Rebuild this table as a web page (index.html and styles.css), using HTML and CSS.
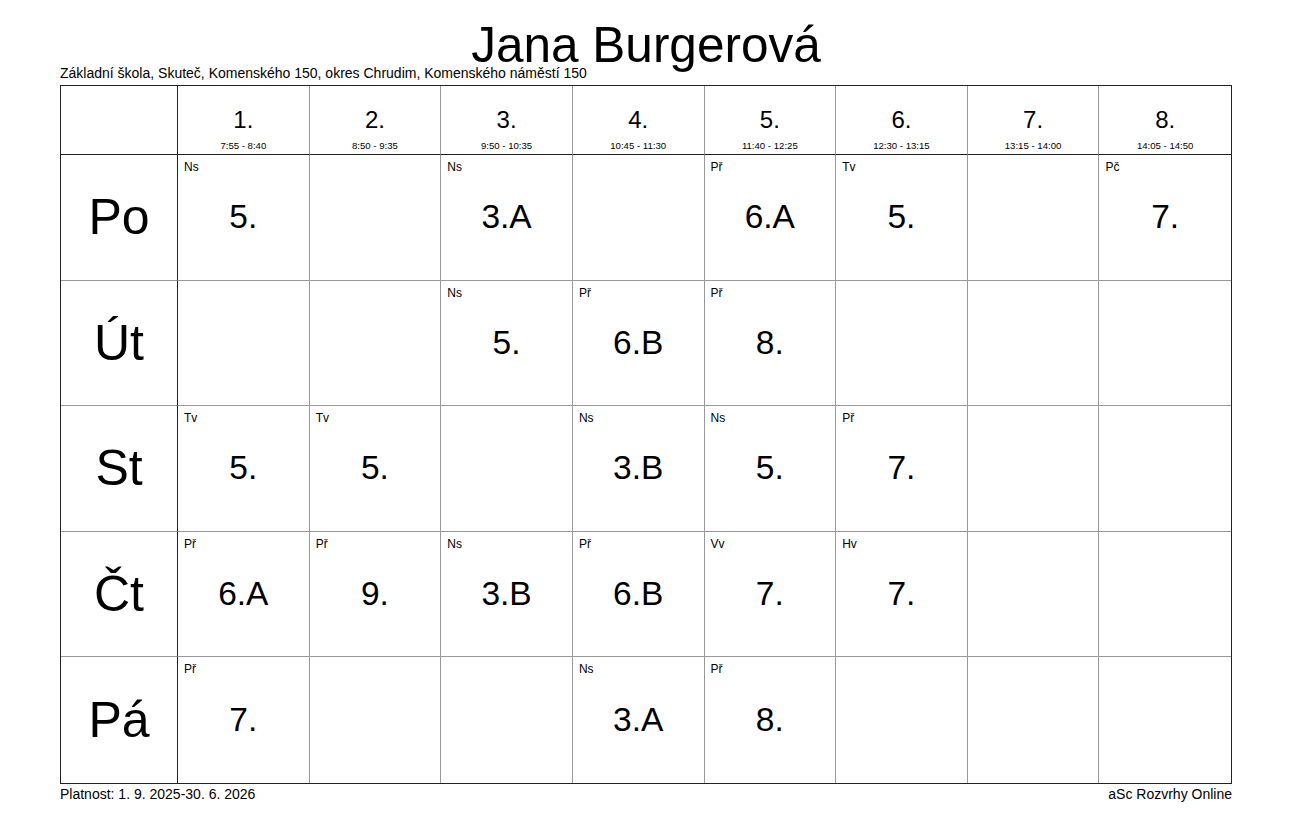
FILE: index.html
```html
<!DOCTYPE html>
<html lang="cs">
<head>
<meta charset="utf-8">
<title>Jana Burgerová</title>
<link rel="stylesheet" href="styles.css">
</head>
<body>
<div class="page">
  <h1 class="title">Jana Burgerová</h1>
  <div class="subtitle">Základní škola, Skuteč, Komenského 150, okres Chrudim, Komenského náměstí 150</div>
  <div class="timetable">
    <div class="corner"></div>
    <div class="period"><span class="num">1.</span><span class="time">7:55 - 8:40</span></div>
    <div class="period"><span class="num">2.</span><span class="time">8:50 - 9:35</span></div>
    <div class="period"><span class="num">3.</span><span class="time">9:50 - 10:35</span></div>
    <div class="period"><span class="num">4.</span><span class="time">10:45 - 11:30</span></div>
    <div class="period"><span class="num">5.</span><span class="time">11:40 - 12:25</span></div>
    <div class="period"><span class="num">6.</span><span class="time">12:30 - 13:15</span></div>
    <div class="period"><span class="num">7.</span><span class="time">13:15 - 14:00</span></div>
    <div class="period last"><span class="num">8.</span><span class="time">14:05 - 14:50</span></div>

    <div class="day">Po</div>
    <div class="cell"><span class="subj">Ns</span><span class="cls">5.</span></div>
    <div class="cell"></div>
    <div class="cell"><span class="subj">Ns</span><span class="cls">3.A</span></div>
    <div class="cell"></div>
    <div class="cell"><span class="subj">Př</span><span class="cls">6.A</span></div>
    <div class="cell"><span class="subj">Tv</span><span class="cls">5.</span></div>
    <div class="cell"></div>
    <div class="cell last"><span class="subj">Pč</span><span class="cls">7.</span></div>

    <div class="day">Út</div>
    <div class="cell"></div>
    <div class="cell"></div>
    <div class="cell"><span class="subj">Ns</span><span class="cls">5.</span></div>
    <div class="cell"><span class="subj">Př</span><span class="cls">6.B</span></div>
    <div class="cell"><span class="subj">Př</span><span class="cls">8.</span></div>
    <div class="cell"></div>
    <div class="cell"></div>
    <div class="cell last"></div>

    <div class="day">St</div>
    <div class="cell"><span class="subj">Tv</span><span class="cls">5.</span></div>
    <div class="cell"><span class="subj">Tv</span><span class="cls">5.</span></div>
    <div class="cell"></div>
    <div class="cell"><span class="subj">Ns</span><span class="cls">3.B</span></div>
    <div class="cell"><span class="subj">Ns</span><span class="cls">5.</span></div>
    <div class="cell"><span class="subj">Př</span><span class="cls">7.</span></div>
    <div class="cell"></div>
    <div class="cell last"></div>

    <div class="day">Čt</div>
    <div class="cell"><span class="subj">Př</span><span class="cls">6.A</span></div>
    <div class="cell"><span class="subj">Př</span><span class="cls">9.</span></div>
    <div class="cell"><span class="subj">Ns</span><span class="cls">3.B</span></div>
    <div class="cell"><span class="subj">Př</span><span class="cls">6.B</span></div>
    <div class="cell"><span class="subj">Vv</span><span class="cls">7.</span></div>
    <div class="cell"><span class="subj">Hv</span><span class="cls">7.</span></div>
    <div class="cell"></div>
    <div class="cell last"></div>

    <div class="day bottom">Pá</div>
    <div class="cell bottom"><span class="subj">Př</span><span class="cls">7.</span></div>
    <div class="cell bottom"></div>
    <div class="cell bottom"></div>
    <div class="cell bottom"><span class="subj">Ns</span><span class="cls">3.A</span></div>
    <div class="cell bottom"><span class="subj">Př</span><span class="cls">8.</span></div>
    <div class="cell bottom"></div>
    <div class="cell bottom"></div>
    <div class="cell bottom last"></div>
  </div>
  <div class="footer">
    <span>Platnost: 1. 9. 2025-30. 6. 2026</span>
    <span>aSc Rozvrhy Online</span>
  </div>
</div>
</body>
</html>
```

FILE: styles.css
```css
html, body {
  margin: 0;
  padding: 0;
  background: #fff;
}

body {
  font-family: "Liberation Sans", Arial, sans-serif;
  color: #000;
}

.page {
  width: 1172px;
  margin-left: 60px;
  padding-top: 22px;
}

.title {
  margin: 0;
  font-size: 49.5px;
  line-height: 46px;
  font-weight: normal;
  text-align: center;
}

.subtitle {
  margin-top: -2px;
  font-size: 14px;
  line-height: 15px;
}

.timetable {
  box-sizing: border-box;
  margin-top: 4px;
  width: 1172px;
  height: 699px;
  border: 1px solid #222;
  display: grid;
  grid-template-columns: 117px repeat(8, 1fr);
  grid-template-rows: 69px repeat(5, 1fr);
}

.corner,
.day {
  border-right: 1px solid #222;
  border-bottom: 1px solid #999;
}

.corner {
  border-bottom-color: #222;
}

.period {
  border-right: 1px solid #999;
  border-bottom: 1px solid #222;
  display: flex;
  flex-direction: column;
  align-items: center;
  padding-top: 20px;
}

.num {
  font-size: 24px;
  line-height: 28px;
}

.time {
  margin-top: 6px;
  font-size: 9.6px;
  line-height: 11px;
}

.day {
  display: flex;
  align-items: center;
  justify-content: center;
  font-size: 50px;
}

.cell {
  position: relative;
  border-right: 1px solid #999;
  border-bottom: 1px solid #999;
  display: flex;
  align-items: center;
  justify-content: center;
}

.last {
  border-right: none;
}

.bottom {
  border-bottom: none;
}

.subj {
  position: absolute;
  top: 5px;
  left: 6px;
  font-size: 12px;
  line-height: 14px;
}

.cls {
  font-size: 33.5px;
  line-height: 40px;
}

.footer {
  margin-top: 3px;
  display: flex;
  justify-content: space-between;
  font-size: 14px;
  line-height: 15px;
}
```
